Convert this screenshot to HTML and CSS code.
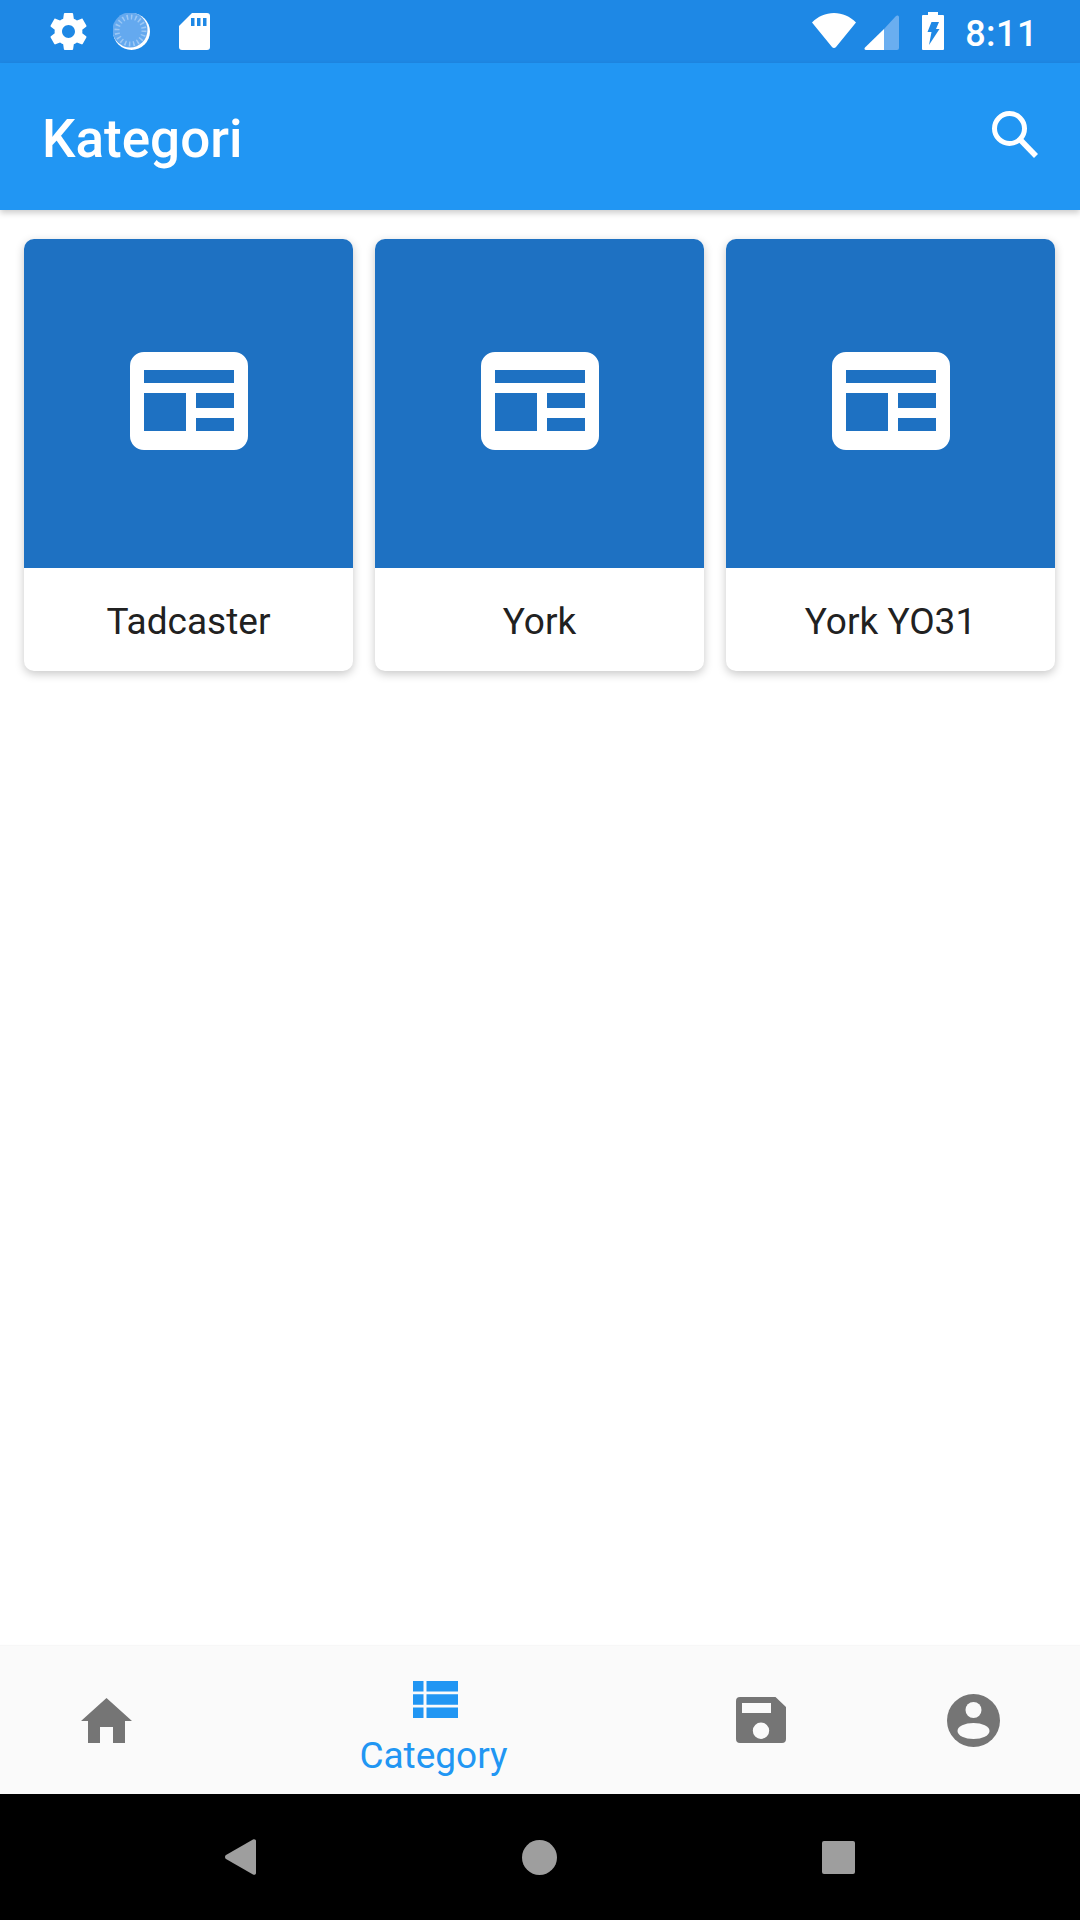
FILE: index.html
```html
<!DOCTYPE html>
<html lang="en">
<head>
    <meta charset="UTF-8">
    <meta name="viewport" content="width=device-width, initial-scale=1.0">
    <title>Kategori</title>
    <link rel="stylesheet" href="styles.css">
</head>
<body>
    <div class="status-bar">
        <svg class="status-gear" width="37" height="37" viewBox="2 2 20 20"><path fill="#fff" fill-rule="evenodd" d="M19.43 12.98c.04-.32.07-.64.07-.98s-.03-.66-.07-.98l2.11-1.65c.19-.15.24-.42.12-.64l-2-3.46c-.12-.22-.39-.3-.61-.22l-2.49 1c-.52-.4-1.08-.73-1.69-.98l-.38-2.65C14.46 2.18 14.25 2 14 2h-4c-.25 0-.46.18-.49.42l-.38 2.65c-.61.25-1.17.59-1.69.98l-2.49-1c-.23-.09-.49 0-.61.22l-2 3.46c-.13.22-.07.49.12.64l2.11 1.65c-.04.32-.07.65-.07.98s.03.66.07.98l-2.11 1.65c-.19.15-.24.42-.12.64l2 3.46c.12.22.39.3.61.22l2.49-1c.52.4 1.08.73 1.69.98l.38 2.65c.03.24.24.42.49.42h4c.25 0 .46-.18.49-.42l.38-2.65c.61-.25 1.17-.59 1.69-.98l2.49 1c.23.09.49 0 .61-.22l2-3.46c.12-.22.07-.49-.12-.64l-2.11-1.65zM12 15.500c-1.93 0-3.500-1.57-3.500-3.500s1.57-3.500 3.500-3.500 3.500 1.57 3.500 3.500-1.57 3.500-3.500 3.500z"/></svg>
        <svg class="status-disc" width="37" height="37" viewBox="0 0 37 37">
            <circle cx="18.500" cy="18.500" r="18.500" fill="#fff"/>
            <circle cx="17" cy="17" r="17.500" fill="#64a9ef"/>
            <circle cx="17.500" cy="17.500" r="13.500" fill="none" stroke="#9cc8f5" stroke-width="5" stroke-dasharray="1.500 2.740"/>
        </svg>
        <svg class="status-sd" width="31" height="37" viewBox="0 0 31 37"><path fill="#fff" d="M13 0h15a3 3 0 0 1 3 3v31a3 3 0 0 1-3 3H3a3 3 0 0 1-3-3V13z"/><path fill="#1e88e5" d="M12 5h3.500v8H12zM18 5h3.500v8H18zM24 5h3.500v8H24z"/></svg>
        <div class="status-right">
            <svg class="status-wifi" width="44" height="36" viewBox="0 0 44 36"><path fill="#fff" d="M0 9.500C6 3.500 13.500 0 22 0s16 3.500 22 9.500L24 34c-1 1.300-3 1.300-4 0z"/></svg>
            <svg class="status-signal" width="35" height="35" viewBox="0 0 35 35"><path fill="#6aaef0" d="M35 2v31a2 2 0 0 1-2 2H20V14L32 1c1-1 3-.5 3 1z"/><path fill="#fff" d="M20 14v21H2c-1.500 0-2-1.500-1-2.500z"/></svg>
            <svg class="status-battery" width="22" height="38" viewBox="0 0 22 38"><path fill="#fff" d="M6 0h10v3h5a1 1 0 0 1 1 1v33a1 1 0 0 1-1 1H1a1 1 0 0 1-1-1V4a1 1 0 0 1 1-1h5z"/><path fill="#1e88e5" d="M9.500 10H17l-3 7h3.500L7 33l2.500-13H5.500z"/></svg>
            <span class="status-time">8:11</span>
        </div>
    </div>

    <header class="app-bar">
        <h1 class="app-title">Kategori</h1>
        <svg class="search-icon" width="46" height="48" viewBox="0 0 46 48"><circle cx="17.500" cy="18.500" r="15" fill="none" stroke="#fff" stroke-width="5"/><path d="M28.500 30L44 46" stroke="#fff" stroke-width="5.500" fill="none"/></svg>
    </header>

    <main class="content">
        <div class="category-grid">
            <div class="card">
                <div class="card-image">
                    <svg class="card-icon" width="118" height="98" viewBox="0 0 118 98"><use href="#article"/></svg>
                </div>
                <div class="card-label">Tadcaster</div>
            </div>
            <div class="card">
                <div class="card-image">
                    <svg class="card-icon" width="118" height="98" viewBox="0 0 118 98"><use href="#article"/></svg>
                </div>
                <div class="card-label">York</div>
            </div>
            <div class="card">
                <div class="card-image">
                    <svg class="card-icon" width="118" height="98" viewBox="0 0 118 98"><use href="#article"/></svg>
                </div>
                <div class="card-label">York YO31</div>
            </div>
        </div>
    </main>

    <nav class="bottom-nav">
        <div class="nav-item">
            <svg width="51" height="45" viewBox="0 0 51 45"><path fill="#757575" d="M25.500 0L51 23h-7v22H32V29H19v16H7V23H0z"/></svg>
        </div>
        <div class="nav-item nav-item-active">
            <svg class="nav-active-icon" width="45" height="37" viewBox="0 0 45 37"><path fill="#2196f3" d="M0 0h10.500v10.500H0zM13.500 0H45v10.500H13.500zM0 13.300h10.500v10.400H0zM13.500 13.300H45v10.400H13.500zM0 26.500h10.500V37H0zM13.500 26.500H45V37H13.500z"/></svg>
            <span class="nav-label">Category</span>
        </div>
        <div class="nav-item">
            <svg width="50" height="46" viewBox="0 0 50 46"><path fill="#757575" fill-rule="evenodd" d="M4 0h35.500L50 10v32a4 4 0 0 1-4 4H4a4 4 0 0 1-4-4V4a4 4 0 0 1 4-4zM6 6v10h29V6zM25 25.500a8.200 8.200 0 1 0 0 16.400 8.200 8.200 0 0 0 0-16.400z"/></svg>
        </div>
        <div class="nav-item">
            <svg width="53" height="53" viewBox="0 0 53 53"><circle cx="26.500" cy="26.500" r="26.500" fill="#757575"/><circle cx="26.500" cy="16" r="8" fill="#fafafa"/><ellipse cx="26.500" cy="37" rx="16" ry="8" fill="#fafafa"/></svg>
        </div>
    </nav>

    <div class="system-nav">
        <svg width="31" height="36" viewBox="0 0 31 36"><path fill="#9e9e9e" d="M1 16L28 .5c1.500-.8 3 0 3 1.500v32c0 1.500-1.500 2.300-3 1.500L1 20c-1.300-.8-1.300-3.200 0-4z"/></svg>
        <svg width="35" height="35" viewBox="0 0 35 35"><circle cx="17.500" cy="17.500" r="17.500" fill="#9e9e9e"/></svg>
        <svg width="33" height="33" viewBox="0 0 33 33"><rect width="33" height="33" rx="2" fill="#9e9e9e"/></svg>
    </div>

    <svg class="icon-defs" width="0" height="0">
        <symbol id="article" viewBox="0 0 118 98">
            <path fill="#fff" fill-rule="evenodd" d="M14 0h90a14 14 0 0 1 14 14v70a14 14 0 0 1-14 14H14A14 14 0 0 1 0 84V14A14 14 0 0 1 14 0zM14 18v13h90V18zM14 41v38h42V41zM66 41v15h38V41zM66 66v13h38V66z"/>
        </symbol>
    </svg>
</body>
</html>
```

FILE: styles.css
```css
* {
    box-sizing: border-box;
}

body {
    font-family: Roboto, 'Liberation Sans', sans-serif;
    background-color: #fff;
    margin: 0;
    width: 1080px;
    height: 1920px;
    display: flex;
    flex-direction: column;
    overflow: hidden;
}

svg {
    display: block;
    flex-shrink: 0;
}

.status-bar {
    height: 63px;
    background-color: #1e88e5;
    display: flex;
    align-items: flex-start;
    padding: 13px 42px 0 50px;
    color: #fff;
}

.status-disc {
    margin-left: 26px;
}

.status-sd {
    margin-left: 29px;
}

.status-right {
    margin-left: auto;
    display: flex;
    align-items: flex-start;
}

.status-signal {
    margin-left: 8px;
    margin-top: 2px;
}

.status-battery {
    margin-left: 23px;
    margin-top: -1px;
}

.status-time {
    margin-left: 21px;
    font-size: 36px;
    font-weight: 500;
    line-height: 40px;
    letter-spacing: 0.5px;
    margin-top: 1px;
}

.app-bar {
    height: 147px;
    background-color: #2196f3;
    display: flex;
    align-items: center;
    justify-content: space-between;
    padding: 0 42px 0 42px;
    box-shadow: 0 3px 6px rgba(0, 0, 0, 0.2);
    position: relative;
}

.app-title {
    margin: 5px 0 0;
    color: #fff;
    font-size: 53px;
    font-weight: 500;
}

.search-icon {
    margin-bottom: 5px;
}

.content {
    flex-grow: 1;
    padding: 29px 24px 0;
}

.category-grid {
    display: grid;
    grid-template-columns: repeat(3, 329px);
    column-gap: 22px;
}

.card {
    background-color: #fff;
    border-radius: 10px;
    box-shadow: 0 3px 10px rgba(0, 0, 0, 0.22);
    overflow: hidden;
}

.card-image {
    height: 329px;
    background-color: #1e71c2;
    display: flex;
    align-items: center;
    justify-content: center;
    padding-bottom: 5px;
}

.card-icon {
    filter: blur(0.6px);
}

.card-label {
    height: 103px;
    display: flex;
    align-items: center;
    justify-content: center;
    padding-top: 4px;
    font-size: 37px;
    color: #212121;
}

.bottom-nav {
    height: 148px;
    background-color: #fafafa;
    display: grid;
    grid-template-columns: 213px 441px 213px 213px;
    box-shadow: 0 -1px 1px rgba(0, 0, 0, 0.03);
    position: relative;
}

.nav-item {
    display: flex;
    flex-direction: column;
    align-items: center;
    justify-content: center;
}

.nav-item-active {
    justify-content: flex-start;
    padding-top: 35px;
}

.nav-active-icon {
    margin-left: 3px;
}

.nav-label {
    font-size: 37px;
    color: #2196f3;
    margin-top: 16px;
}

.system-nav {
    height: 126px;
    background-color: #000;
    display: grid;
    grid-template-columns: 240px 420px 420px;
    align-items: center;
}

.system-nav svg:nth-child(1) {
    margin-left: 225px;
}

.system-nav svg:nth-child(2) {
    margin-left: 282px;
}

.system-nav svg:nth-child(3) {
    margin-left: 162px;
}

.icon-defs {
    position: absolute;
}
```
